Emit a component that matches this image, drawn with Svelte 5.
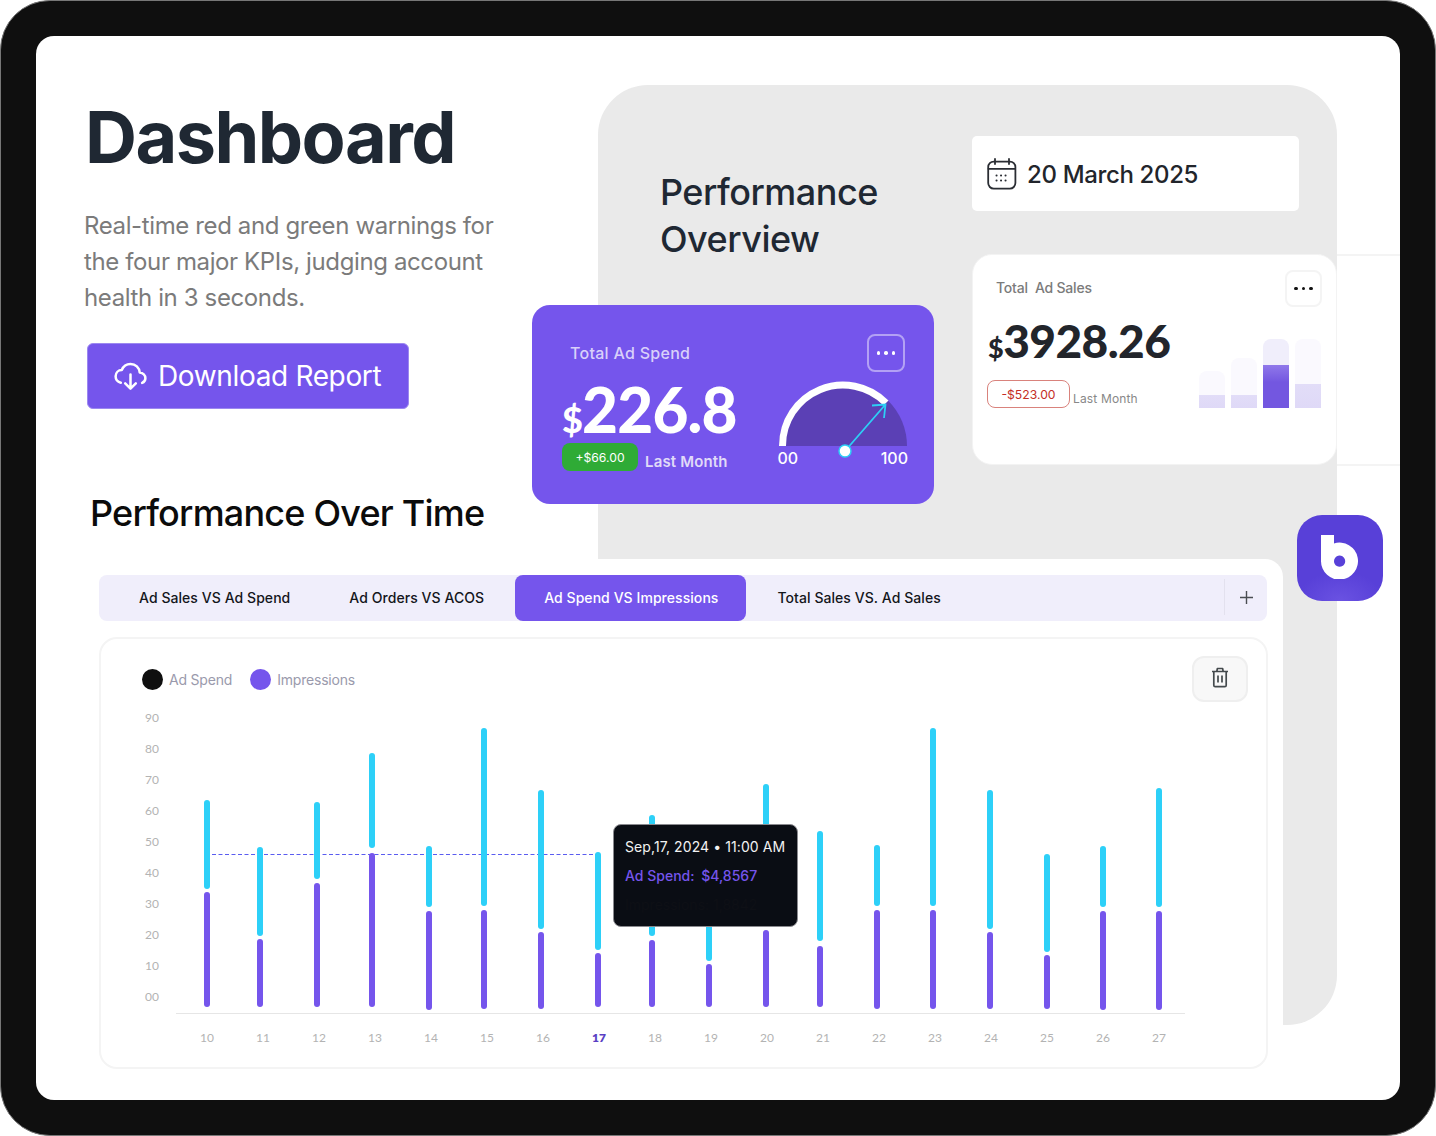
<script>
  const bars = [
    [207, 800, 889, 892, 1007], [260, 847, 936, 939, 1007], [317, 802, 879, 883, 1007],
    [372, 753, 848, 853, 1007], [429, 846, 907, 911, 1010], [484, 728, 906, 910, 1009],
    [541, 790, 929, 932, 1009], [598, 852, 950, 953, 1007], [652, 815, 936, 940, 1007],
    [709, 850, 961, 964, 1007], [766, 784, 927, 930, 1007], [820, 831, 941, 946, 1007],
    [877, 845, 906, 910, 1009], [933, 728, 906, 910, 1009], [990, 790, 929, 932, 1009],
    [1047, 854, 952, 955, 1009], [1103, 846, 907, 911, 1010], [1159, 788, 907, 911, 1010]
  ];
  const xLabels = Array.from({ length: 18 }, (_, i) => ({ x: 207 + i * 56, t: String(10 + i) }));
  const yLabels = ['90', '80', '70', '60', '50', '40', '30', '20', '10', '00'];
  const mini = [
    { h: 37, f: 13, active: false },
    { h: 50, f: 13, active: false },
    { h: 69, f: 43, active: true },
    { h: 69, f: 24, active: false }
  ];
  const tabs = ['Ad Sales VS Ad Spend', 'Ad Orders VS ACOS', 'Ad Spend VS Impressions', 'Total Sales VS. Ad Sales'];
</script>

<div class="frame">
  <div class="screen">
    <div class="panel">
      <h2 class="overview">Performance<br />Overview</h2>
      <div class="panel-side">
        <div class="date">
          <svg width="30" height="32" viewBox="0 0 30 32" fill="none" stroke="#2a2d33" stroke-width="1.8" stroke-linecap="round">
            <rect x="1.2" y="3.6" width="27.2" height="27" rx="5.5" />
            <path d="M1.5 10.8H28.2M8 1v5M22 1v5" />
            <g stroke-width="2" stroke-dasharray="0.1 4.4">
              <path d="M9.5 17.5h11.5M9.5 22.5h11.5" />
            </g>
          </svg>
          <span>20 March 2025</span>
        </div>
        <div class="sales">
          <div class="sales-top">
            <span class="sales-label">Total&nbsp; Ad Sales</span>
            <button class="dots dark" aria-label="More"><i></i><i></i><i></i></button>
          </div>
          <div class="sales-body">
            <div>
              <div class="price dark-price"><small>$</small>3928.26</div>
              <div class="sales-foot">
                <span class="bad">-$523.00</span>
                <span class="last">Last Month</span>
              </div>
            </div>
            <div class="mini">
              {#each mini as m}
                <div class="mini-bar" class:on={m.active} style="height:{m.h}px">
                  <div class="mini-fill" style="height:{m.f}px"></div>
                </div>
              {/each}
            </div>
          </div>
        </div>
      </div>
    </div>

    <div class="sales-ghost"></div>

    <div class="spend">
      <div class="spend-left">
        <div class="spend-label">Total Ad Spend</div>
        <div class="price white-price"><small>$</small>226.8</div>
        <div class="spend-foot">
          <span class="good">+$66.00</span>
          <span class="spend-last">Last Month</span>
        </div>
      </div>
      <button class="dots light" aria-label="More"><i></i><i></i><i></i></button>
      <svg class="gauge" width="136" height="84" viewBox="0 0 136 84">
        <path d="M4 62A64 64 0 0 1 132 62Z" fill="#5b40b5" />
        <path d="M7.5 62A60.5 60.5 0 0 1 111 19" fill="none" stroke="#fff" stroke-width="7" />
        <path d="M70 67L110 21M97 21.5L110.5 20.5L109 34" fill="none" stroke="#2dcff6" stroke-width="1.8" />
        <circle cx="70" cy="67" r="6" fill="#fff" stroke="#2dcff6" stroke-width="1.5" />
        <text x="2.500" y="80" class="g-text">00</text>
        <text x="133" y="80" class="g-text" text-anchor="end">100</text>
      </svg>
    </div>

    <div class="logo">
      <svg width="38" height="44" viewBox="0 0 38 44">
        <path fill="#fff" fill-rule="evenodd" d="M0 0H13V8.4A18.5 18.5 0 1 1 0 26ZM18.6 20.6a5.6 5.6 0 1 0 .01 0Z" />
      </svg>
    </div>

    <h1>Dashboard</h1>
    <p class="sub">Real-time red and green warnings for<br />the four major KPIs, judging account<br />health in 3 seconds.</p>
    <button class="download">
      <svg width="33" height="29" viewBox="0 0 34 30" fill="none" stroke="#fff" stroke-width="2.6" stroke-linecap="round" stroke-linejoin="round">
        <path d="M7 21.5C3.6 20.6 1.6 18 1.6 14.8 1.6 11 4.5 8.3 8 8.2 9.6 4.3 13 2 17 2c5.200 0 9.100 3.800 9.500 8.800 3.400.4 5.900 2.800 5.900 5.900 0 2.400-1.400 4.100-3.400 4.900" />
        <path d="M17 13v14M11.500 22l5.500 5.500 5.500-5.500" />
      </svg>
      <span>Download Report</span>
    </button>
    <h2 class="over-time">Performance Over Time</h2>

    <section class="chart-card">
      <div class="tabs">
        {#each tabs as t, i}
          <div class="tab" class:active={i === 2}>{t}</div>
        {/each}
        <div class="plus">
          <svg width="13" height="13" viewBox="0 0 13 13" stroke="#4a4d52" stroke-width="1.4"><path d="M6.500 0V13M0 6.500H13" /></svg>
        </div>
      </div>

      <div class="chart">
        <div class="chart-head">
          <div class="legend">
            <span class="dot black"></span><span class="leg-text">Ad Spend</span>
            <span class="dot purple"></span><span class="leg-text">Impressions</span>
          </div>
          <button class="trash" aria-label="Delete">
            <svg width="18" height="21" viewBox="0 0 18 21" fill="none" stroke="#444a4d" stroke-width="1.700" stroke-linejoin="round">
              <path d="M1 4.500H17M5.800 4.500L6.400 1.500H11.600L12.200 4.500" />
              <path d="M2.800 4.500V18.200C2.800 19 3.300 19.700 4.200 19.700H13.800C14.700 19.700 15.200 19 15.200 18.200V4.500" />
              <path d="M7 8.500V15.500M11 8.500V15.500" />
            </svg>
          </button>
        </div>

        <svg class="plot" viewBox="99 637 1168 431" width="1168" height="431">
          {#each yLabels as t, i}
            <text x="152" y={722 + i * 31} class="axis" text-anchor="middle">{t}</text>
          {/each}
          <line x1="176" x2="1185" y1="1013.500" y2="1013.500" stroke="#e6e6e6" />
          <line x1="212" x2="596" y1="854.500" y2="854.500" stroke="#5a5cf0" stroke-dasharray="4 2.500" />
          {#each bars as b}
            <line x1={b[0]} x2={b[0]} y1={b[1] + 3} y2={b[2] - 3} stroke="#2dd0f8" stroke-width="6" stroke-linecap="round" />
            <line x1={b[0]} x2={b[0]} y1={b[3] + 3} y2={b[4] - 3} stroke="#7555ec" stroke-width="6" stroke-linecap="round" />
          {/each}
          {#each xLabels as l, i}
            <text x={l.x} y="1042" class="axis" class:cur={i === 7} text-anchor="middle">{l.t}</text>
          {/each}
        </svg>

        <div class="tip">
          <div class="tip-date">Sep,17, 2024 • 11:00 AM</div>
          <div class="tip-spend"><span>Ad Spend:</span> <span>$4,8567</span></div>
          <div class="tip-imp">Impressions: 1,8842</div>
        </div>
      </div>
    </section>
  </div>
</div>

<style>
  :global(body) { margin: 0; background: #fff; }
  * { box-sizing: border-box; }
  h1, h2, p { margin: 0; }
  button { font: inherit; padding: 0; }

  .frame {
    width: 1436px;
    height: 1136px;
    padding: 35px;
    background: #0f0f0f;
    border-radius: 50px;
    font-family: Inter, "Liberation Sans", sans-serif;
    color: #1f2833;
    border: 1px solid #777;
  }
  .screen {
    position: relative;
    width: 1364px;
    height: 1064px;
    background: #fff;
    border-radius: 18px;
    overflow: hidden;
    padding: 58px 0 0 48px;
  }

  h1 {
    font-size: 72px;
    line-height: 86px;
    font-weight: 700;
    letter-spacing: -1.550px;
    color: #1f2833;
    margin-left: 1px;
  }
  .sub {
    margin-top: 28px;
    font-size: 24px;
    line-height: 36px;
    color: #7b7b7b;
    letter-spacing: -0.380px;
  }
  .download {
    margin: 27px 0 0 3px;
    width: 322px;
    height: 66px;
    display: flex;
    align-items: center;
    gap: 11px;
    padding-left: 26px;
    background: #7555ec;
    border: 1px solid #9c88f0;
    border-radius: 6px;
    color: #fff;
    font-size: 28px;
    letter-spacing: -0.350px;
    font-family: Inter, sans-serif;
  }
  .over-time {
    position: relative;
    margin: 82px 0 0 6px;
    font-size: 36px;
    line-height: 44px;
    font-weight: 500;
    letter-spacing: -0.790px;
    color: #0b0b0b;
    z-index: 3;
  }

  .panel {
    position: absolute;
    left: 562px;
    top: 49px;
    width: 739px;
    height: 940px;
    background: #eaeaea;
    border-radius: 50px 50px 50px 0;
    display: flex;
    padding: 51px 0 0 62px;
  }
  .overview {
    width: 312px;
    padding-top: 33px;
    font-size: 36px;
    line-height: 47px;
    font-weight: 500;
    letter-spacing: -0.500px;
    color: #1f2833;
  }
  .panel-side { width: 365px; display: flex; flex-direction: column; gap: 43px; }
  .date {
    width: 327px;
    height: 75px;
    background: #fff;
    border-radius: 5px;
    display: flex;
    align-items: center;
    gap: 10px;
    padding: 0 0 0 15px;
    font-size: 24px;
    font-weight: 500;
    letter-spacing: -0.350px;
    color: #22252b;
  }
  .date span { padding-top: 2px; }
  .sales {
    position: relative;
    z-index: 2;
    height: 211px;
    background: #fff;
    border-radius: 20px;
    border: 1px solid #f3f3f3;
    padding: 15px 15px 0 15px;
  }
  .sales-top { display: flex; justify-content: space-between; align-items: center; padding-left: 8px; }
  .sales-label { font-size: 14px; font-weight: 500; color: #7b7b7b; letter-spacing: -0.200px; margin-top: -2px; }
  .dots {
    width: 37px;
    height: 37px;
    border-radius: 8px;
    display: flex;
    align-items: center;
    justify-content: center;
    gap: 4px;
    background: transparent;
  }
  .dots i { width: 3.500px; height: 3.500px; border-radius: 50%; }
  .dots.dark { border: 2px solid #f4f4f4; margin-right: -1px; }
  .dots.dark i { background: #111; }
  .dots.light { border: 2px solid rgba(255, 255, 255, 0.45); position: absolute; left: 335px; top: 29px; width: 38px; height: 38px; }
  .dots.light i { background: #fff; }
  .sales-body { display: flex; justify-content: space-between; margin-top: 9px; }
  .price { font-family: Lato, sans-serif; font-weight: 900; }
  .price small { font-weight: 900; }
  .dark-price { font-size: 46px; line-height: 50px; color: #22252b; letter-spacing: -0.550px; }
  .dark-price small { font-size: 27px; }
  .sales-foot { display: flex; align-items: flex-end; gap: 3px; margin-top: 7px; margin-left: -1px; }
  .bad {
    width: 83px;
    height: 28px;
    border: 1.500px solid #d9827c;
    border-radius: 8px;
    color: #c42d26;
    font-size: 12.200px;
    display: flex;
    align-items: center;
    justify-content: center;
  }
  .last { font-size: 12px; color: #888; line-height: 15px; letter-spacing: 0.15px; margin-bottom: 2px; }
  .mini { display: flex; align-items: flex-end; gap: 6px; height: 69px; margin-top: 23px; }
  .mini-bar { width: 26px; background: #faf9fe; border-radius: 8px 8px 0 0; display: flex; align-items: flex-end; overflow: hidden; }
  .mini-bar.on { background: #f0eefb; }
  .mini-fill { width: 100%; background: linear-gradient(#e2ddf8, #dfd9f7); }
  .mini-bar.on .mini-fill { background: linear-gradient(#9078ea, #7357e0 40%, #7357e0); }
  .sales-ghost {
    position: absolute;
    left: 1301px;
    top: 218px;
    width: 63px;
    height: 212px;
    border-top: 2px solid #f4f4f4;
    border-bottom: 2px solid #f4f4f4;
  }

  .spend {
    position: absolute;
    left: 496px;
    top: 269px;
    width: 402px;
    height: 199px;
    z-index: 3;
    background: #7555ec;
    border-radius: 18px;
  }
  .spend-left { padding: 38px 0 0 30px; }
  .spend-label { padding-left: 8px; font-size: 16px; line-height: 20px; font-weight: 500; color: #d9d0fa; letter-spacing: 0.280px; }
  .white-price { font-size: 62px; line-height: 68px; color: #fff; margin-top: 12px; letter-spacing: -0.800px; }
  .white-price small { font-size: 36px; }
  .spend-foot { display: flex; align-items: flex-end; gap: 7px; margin-top: -10px; }
  .good {
    width: 76px;
    height: 28px;
    background: #2fab36;
    border-radius: 8px;
    color: #fff;
    font-size: 12.200px;
    display: flex;
    align-items: center;
    justify-content: center;
  }
  .spend-last { font-size: 15px; line-height: 18px; font-weight: 600; color: #e0daf8; margin-bottom: 0; letter-spacing: 0.150px; }
  .gauge { position: absolute; left: 243px; top: 79px; overflow: visible; }
  .g-text { font-family: Inter, sans-serif; font-size: 16px; font-weight: 500; fill: #fff; }

  .logo {
    position: absolute;
    left: 1261px;
    top: 479px;
    width: 86px;
    height: 86px;
    z-index: 3;
    border-radius: 25px;
    background: radial-gradient(ellipse 50% 35% at 50% 100%, #6a52e2, #5840d8);
    display: flex;
    align-items: center;
    justify-content: center;
    padding-bottom: 2px;
  }

  .chart-card {
    position: relative;
    z-index: 2;
    margin: 24px 0 0 -1px;
    width: 1200px;
    height: 530px;
    background: #fff;
    border-radius: 0 18px 0 0;
    padding: 16px 16px 0 16px;
  }
  .tabs {
    display: flex;
    height: 46px;
    background: #f0eefb;
    border-radius: 8px;
    font-size: 14px;
    font-weight: 500;
    letter-spacing: 0.060px;
    color: #14161b;
    padding-left: 11px;
    align-items: stretch;
  }
  .tab { display: flex; align-items: center; padding: 0 29px 1px; white-space: nowrap; }
  .tab:nth-child(1) { margin-right: 1px; }
  .tab:nth-child(2) { margin-right: 1px; padding-right: 30px; }
  .tab:nth-child(4) { padding-left: 31px; }
  .tab.active { background: #7555ec; color: #fff; border-radius: 8px; padding-right: 28px; }
  .plus {
    position: absolute;
    right: 16px;
    top: 20px;
    width: 43px;
    height: 36px;
    border-left: 1px solid #e3e1ee;
    display: flex;
    align-items: center;
    justify-content: center;
  }
  .chart {
    position: relative;
    margin-top: 16px;
    width: 1169px;
    height: 432px;
    border: 2px solid #f4f4f4;
    border-radius: 18px;
    padding: 17px 18px 0 41px;
  }
  .chart-head { display: flex; justify-content: space-between; align-items: flex-start; position: relative; z-index: 1; }
  .legend { display: flex; align-items: center; margin-top: 13px; }
  .dot { width: 21px; height: 21px; border-radius: 50%; }
  .dot.black { background: #0f0f0f; }
  .dot.purple { background: #7555ec; margin-left: 18px; }
  .leg-text { margin: -1px 0 0 6px; font-size: 14px; color: #9a9aac; letter-spacing: -0.200px; }
  .trash {
    width: 56px;
    height: 46px;
    border-radius: 12px;
    background: #f8f8f8;
    border: 2px solid #efefef;
    display: flex;
    align-items: center;
    justify-content: center;
    padding-bottom: 3px;
  }
  .plot { position: absolute; left: -2px; top: -2px; }
  .axis { font-family: Lato, sans-serif; font-size: 12px; fill: #b3b3b3; }
  .axis.cur { fill: #5a3fc4; font-weight: 800; }
  .tip {
    position: absolute;
    left: 512px;
    top: 185px;
    width: 185px;
    height: 103px;
    background: #0a0d14;
    border: 1px solid #8a8a8f;
    border-radius: 8px;
    padding: 12px 11px 0 11px;
    font-size: 14px;
    line-height: 20px;
  }
  .tip-date { color: #f2f2f2; white-space: nowrap; letter-spacing: 0.090px; }
  .tip-spend { margin-top: 9px; color: #7555ec; font-weight: 500; white-space: nowrap; }
  .tip-spend span + span { margin-left: 3px; }
  .tip-imp { margin-top: 9px; color: #0e1016; white-space: nowrap; }
</style>
